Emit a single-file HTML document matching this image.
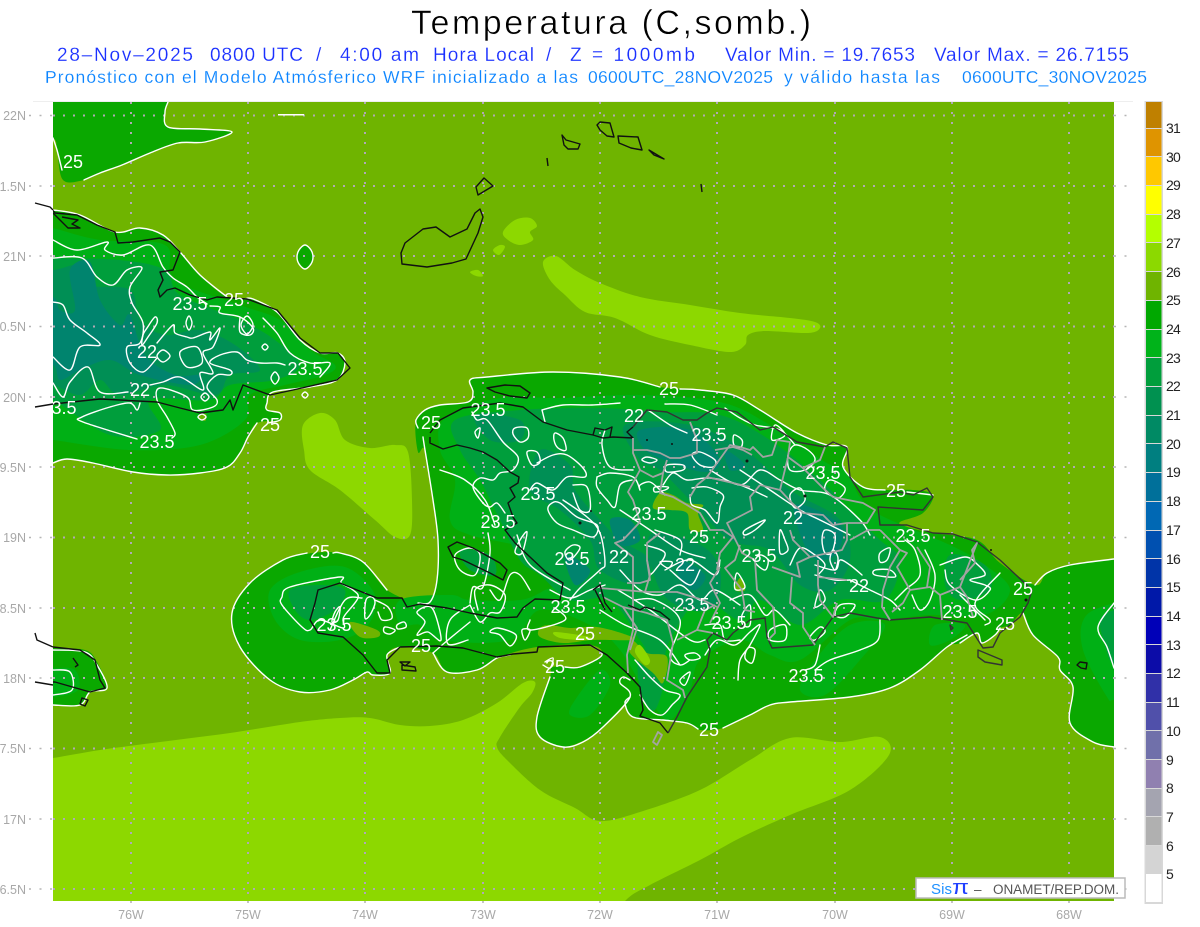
<!DOCTYPE html>
<html><head><meta charset="utf-8"><title>Temperatura</title>
<style>
html,body{margin:0;padding:0;background:#fff}
svg{display:block;font-family:"Liberation Sans",sans-serif}
.w{fill:none;stroke:#fff;stroke-width:1.4;stroke-linejoin:round;stroke-linecap:round}
.k{fill:none;stroke:#111;stroke-width:1.4;stroke-linejoin:round}
.g{fill:none;stroke:#a3a3a3;stroke-width:1.8;stroke-linejoin:round}
.l{fill:#fff;font-size:18px;text-anchor:middle}
.ax{fill:#a8a8a8;font-size:12.5px}
.cb{fill:#222;font-size:14px;letter-spacing:-.8px}
.t{stroke:#fff;stroke-width:.5}
.t2{stroke:#fff;stroke-width:.15}
</style></head><body>
<svg width="1200" height="927" viewBox="0 0 1200 927" xmlns="http://www.w3.org/2000/svg">
<rect width="1200" height="927" fill="#fff"/>
<text x="411" y="34" font-size="34" textLength="400" lengthAdjust="spacing" fill="#000" class="t">Temperatura (C,somb.)</text>
<g fill="#1a30ff" font-size="19" class="t2">
<text x="57" y="61" textLength="136" lengthAdjust="spacing">28–Nov–2025</text>
<text x="210" y="61" textLength="93" lengthAdjust="spacing">0800 UTC</text>
<text x="316" y="61">/</text>
<text x="340" y="61" textLength="79" lengthAdjust="spacing">4:00 am</text>
<text x="433" y="61" textLength="101" lengthAdjust="spacing">Hora Local</text>
<text x="546" y="61">/</text>
<text x="570" y="61" textLength="125" lengthAdjust="spacing">Z = 1000mb</text>
<text x="725" y="61" textLength="190" lengthAdjust="spacing">Valor Min. = 19.7653</text>
<text x="934" y="61" textLength="195" lengthAdjust="spacing">Valor Max. = 26.7155</text>
</g>
<g font-size="17.5" fill="#0a84ff" class="t2">
<text x="45" y="83" textLength="533" lengthAdjust="spacing">Pronóstico con el Modelo Atmósferico WRF inicializado a las</text>
<text x="588" y="83" textLength="185" lengthAdjust="spacing">0600UTC_28NOV2025</text>
<text x="784" y="83" textLength="156" lengthAdjust="spacing">y válido hasta las</text>
<text x="962" y="83" textLength="185" lengthAdjust="spacing">0600UTC_30NOV2025</text>
</g>

<clipPath id="m"><rect x="53" y="102" width="1061" height="799"/></clipPath>
<rect x="33" y="101" width="1100" height="1" fill="#eee"/>
<g clip-path="url(#m)">
<rect x="53" y="102" width="1061" height="799" fill="#6fb400"/>
<!-- light zones -->
<g fill="#8dd800" class="s">
<polygon points="543,262 556,256 575,270 600,283 640,297 690,305 740,313 790,318 815,322 820,328 808,333 765,331 748,335 745,345 730,352 690,345 650,335 615,318 585,312 565,295 550,280"/>
<polygon points="503,232 515,220 530,218 537,226 530,232 533,240 520,245 508,240"/>
<polygon points="493,250 500,245 505,247 499,255"/>
<polygon points="470,272 478,270 483,276 476,276"/>
<polygon points="303,425 320,413 335,420 345,440 370,448 395,445 408,452 412,500 410,535 395,537 375,520 340,490 310,470 304,450"/>
<polygon points="20,762 53,758 100,750 160,742 230,733 300,722 340,718 370,718 400,725 430,726 463,720 497,703 523,683 535,682 532,693 520,707 500,737 497,747 507,760 540,790 575,808 600,821 640,812 700,790 750,760 790,738 840,742 880,737 889,755 850,790 790,815 740,838 700,860 650,885 625,901 600,935 20,935"/>
</g>
<!-- 24-25 zones -->
<g fill="#0aa800" class="s">
<polygon points="25,80 170,80 168,102 165,112 168,127 200,129 232,132 205,142 178,143 150,153 122,165 100,173 84,180 63,180 57,150 53,138 25,125"/>
<polygon points="25,205 53,210 80,215 115,232 140,228 163,235 180,252 200,275 227,297 253,299 277,312 300,340 320,353 338,353 345,363 337,380 310,387 273,392 267,403 267,410 280,413 280,420 257,423 248,437 240,453 227,467 200,473 167,475 133,472 93,463 67,459 53,463 25,470"/>
<polygon points="25,645 53,648 85,650 97,662 107,688 90,692 80,705 53,705 25,705"/>
<polygon points="305,245 311,250 313,257 311,264 305,269 299,264 297,257 299,250"/>
<polygon points="470,380 487,377 553,372 620,377 660,387 700,390 733,395 760,410 797,433 827,445 847,447 843,467 863,487 887,490 913,490 933,495 923,513 900,522 907,527 933,533 977,540 1000,563 1035,585 1047,573 1070,565 1114,559 1145,555 1145,752 1114,747 1093,742 1070,723 1073,687 1060,670 1058,657 1033,635 1023,613 1010,625 1000,628 995,635 982,643 977,633 960,643 947,647 920,670 890,688 850,697 790,702 770,705 750,715 723,728 700,730 687,723 663,720 633,717 625,703 630,697 610,720 590,737 563,747 540,737 537,717 550,677 553,667 580,667 602,655 590,645 537,647 497,658 477,670 447,672 433,653 400,647 387,655 390,673 373,675 367,672 353,680 330,690 300,692 270,680 240,647 232,613 250,583 283,560 312,553 340,553 363,562 387,590 418,603 430,602 437,580 438,540 433,500 425,450 418,452 416,420 430,408 440,405 468,402 473,392"/>
</g>
<!-- 24 band -->
<g fill="#00b015" class="s">
<polygon points="25,222 53,228 100,240 165,245 175,280 240,305 280,320 310,350 335,365 325,375 285,385 250,395 245,420 200,445 130,450 53,440 25,438"/>
<polygon points="445,418 500,398 560,398 640,395 720,402 770,425 825,462 845,470 860,497 880,515 950,545 985,565 1010,590 985,615 930,615 880,620 850,620 800,660 770,655 740,640 700,660 690,690 670,720 650,700 620,650 590,625 540,610 510,640 440,640 420,625 400,625 400,600 450,595 470,600 520,600 545,590 560,580 530,550 470,535 450,520 455,480 440,450"/>
<polygon points="270,590 300,572 345,567 375,595 368,625 340,640 300,640 275,620"/>
<polygon points="1140,600 1114,603 1085,617 1083,650 1107,697 1114,700 1140,703"/>
<polygon points="850,625 885,625 860,660 825,695 800,690 815,660"/>
<polygon points="935,625 965,625 950,640 930,645"/>
<polygon points="575,700 600,670 610,685 590,715 570,715"/>
<polygon points="25,668 53,668 75,670 78,690 53,697 25,697"/>
</g>
<!-- 23 band -->
<g fill="#009e3c" class="s">
<polygon points="25,256 53,258 120,260 165,270 180,295 240,320 275,340 300,365 275,380 230,385 210,400 150,400 160,430 110,435 53,400 25,395"/>
<polygon points="455,420 520,410 600,408 660,412 720,415 770,440 820,480 850,510 880,540 900,560 885,600 840,600 800,625 760,600 740,620 700,600 670,640 660,670 640,640 610,600 570,600 540,575 520,560 500,520 480,480 460,450"/>
<polygon points="290,590 320,585 345,590 335,610 310,620 295,610"/>
<polygon points="950,555 985,565 990,590 960,600 945,585"/>
<polygon points="1140,608 1114,610 1100,620 1105,645 1114,665 1140,668"/>
<polygon points="640,650 665,665 655,710 640,690"/>
<polygon points="460,550 490,555 495,575 470,570"/>
</g>
<!-- 22 band -->
<g fill="#008f55" class="s">
<polygon points="25,268 53,270 80,265 90,285 130,290 140,320 165,335 200,330 235,345 260,370 230,375 215,395 165,385 120,395 100,380 80,395 53,385 25,382"/>
<polygon points="625,425 690,425 745,450 790,490 840,520 850,560 830,590 800,585 770,550 730,540 690,500 660,470 640,460"/>
<polygon points="540,450 570,465 575,490 600,520 620,540 650,560 640,585 600,570 590,540 560,510 530,490"/>
<polygon points="650,535 700,545 720,570 715,605 690,610 660,590"/>
<polygon points="475,415 520,420 520,440 490,440"/>
</g>
<!-- 21 band -->
<g fill="#00846e" class="s">
<polygon points="25,294 53,297 60,310 75,310 70,270 90,262 100,300 120,325 130,315 145,355 175,375 200,375 190,385 140,375 110,360 80,370 60,380 53,365 25,362"/>
<polygon points="640,430 690,430 720,460 705,472 670,462 645,450"/>
<polygon points="795,505 840,525 835,555 810,555"/>
<polygon points="610,520 630,520 640,540 620,545"/>
<polygon points="680,560 705,575 695,590 680,580"/>
<polygon points="565,555 590,570 575,585"/>
<polygon points="725,450 745,465 730,470"/>
</g>
<!-- olive patches -->
<g fill="#6fb400" class="s">
<polygon points="660,493 673,495 687,503 703,505 698,513 703,530 690,530 687,513 670,510 653,508"/>
<polygon points="540,628 550,625 570,628 597,627 627,635 632,640 593,640 563,643 540,637"/>
<polygon points="632,640 647,653 667,657 663,683 653,673 630,653"/>
<polygon points="350,622 377,630 378,637 360,637"/>
<polygon points="198,416 206,414 205,421"/>
<polygon points="735,590 740,578 745,590"/>
</g>
<g fill="#8dd800" class="s"><polygon points="555,632 590,637 585,640 560,638"/><polygon points="640,645 650,660 645,665 635,652"/></g>
<!-- grid -->
<g stroke="#b0a9b4" stroke-width="2" stroke-dasharray="2 8" fill="none">
<path d="M131 102V901M248 102V901M365 102V901M483 102V901M600 102V901M717 102V901M835 102V901M952 102V901M1069 102V901"/>
<path d="M53 115.5H1114M53 186H1114M53 256H1114M53 326.5H1114M53 397H1114M53 467H1114M53 537.5H1114M53 608H1114M53 678H1114M53 748.5H1114M53 819H1114M53 889H1114"/>
</g>
<!-- 25 contours -->
<rect x="278" y="114" width="26" height="1.5" fill="#fff"/>
<g class="w s" stroke-width="1.5">
<polyline points="53,138 57,150 62,170"/>
<polyline points="84,180 100,173 122,165 150,153 178,143 205,142 232,132 200,129 168,127 165,112 168,102"/>
<polyline points="53,210 80,215 115,232 140,228 163,235 180,252 200,275 227,297"/>
<polyline points="245,299 253,299 277,312 300,340 320,353 338,353 345,363 337,380 310,387 273,392 267,403 267,410 280,413 280,420 268,423"/>
<polyline points="257,423 248,437 240,453 227,467 200,473 167,475 133,472 93,463 67,459 53,463"/>
<polygon points="305,245 311,250 313,257 311,264 305,269 299,264 297,257 299,250"/>
<polyline points="660,387 620,377 553,372 487,377 470,380 473,392 468,402 440,405 425,410 416,420 418,428"/>
<polyline points="680,389 700,390 733,395 760,410 797,433 827,445 847,447 843,467 863,487 885,490"/>
<polyline points="1035,585 1047,573 1070,565 1114,559"/>
<polyline points="907,492 933,495"/>
<polyline points="423,437 425,450 433,500 438,540 437,580 430,602 418,603"/>
<polyline points="333,553 340,553 363,562 387,590"/>
<polyline points="307,553 283,560 250,583 232,613 240,647 270,680 300,692 330,690 353,680 367,672 373,675 390,673 387,655 400,647"/>
<polyline points="433,653 447,672 477,670 497,658 510,655"/>
<polyline points="565,667 580,667 602,655 590,645"/>
<polyline points="550,677 537,717 540,737 563,747 583,742 603,727 630,697 620,683 623,677 630,680"/>
<polyline points="630,697 625,703 633,717 663,720 687,723 698,729"/>
<polyline points="723,728 750,715 770,705 790,702 850,697 890,688 920,670 947,647 967,635"/>
<polyline points="960,643 977,633 982,643 995,635 1000,628"/>
<polyline points="1023,613 1033,635 1058,657 1060,670 1073,687 1070,723 1093,742 1114,747"/>
<polyline points="545,662 553,658 550,668 543,665"/>
</g>
<!-- inner contours -->
<g class="w s">
<polyline points="53,240 77,250 107,242 105,250 123,255 150,245 163,267 173,278 187,287 197,297 207,304"/>
<polyline points="210,306 220,307 220,313 240,317 253,328 250,335 240,332 240,317"/>
<polyline points="263,318 277,333 290,353 310,363 330,363 320,377"/>
<polyline points="285,365 277,363 260,363 247,360 237,352 220,355 210,363 230,370 230,375 217,375 207,387 217,400 213,407 193,410 187,397 160,388 157,400 167,417 175,433 172,438"/>
<polyline points="137,439 83,422 82,417 110,407 130,403 137,410 140,403"/>
<polyline points="128,392 100,392 88,367 70,382 63,397 53,383"/>
<polyline points="53,258 82,258 97,277 113,285 127,270 142,268 130,287 132,303 143,323 140,343 127,347 130,363 143,372 157,358"/>
<polyline points="53,302 63,305 70,320 87,333 100,345 80,347 70,370 53,357"/>
<polygon points="147,328 155,317 157,323 148,337 142,345 143,335"/>
<polygon points="157,356 163,350 170,356 163,362"/>
<polygon points="180,352 197,347 202,363 187,367"/>
<polygon points="189,316 192,323 189,330 186,323"/>
<polygon points="247,316 253,325 247,334 241,325"/>
<polygon points="265,344 268,347 265,350 262,347"/>
<polygon points="275,372 279,378 275,384 271,378"/>
<polygon points="205,393 209,397 205,401 201,397"/>
<polygon points="198,417 202,414 206,417 202,420"/>
<polygon points="305,392 308,395 305,398 302,395"/>
<polyline points="157,343 173,325 175,333 187,337 193,338 210,332 210,340 220,328 213,347 203,353 213,373 200,373 203,390 180,377 163,382 150,385"/>
<!-- Jamaica -->
<polyline points="53,650 85,652 97,665 107,688 90,692 80,705 53,705"/>
<polyline points="53,670 70,672 72,690 53,695"/>
<!-- Tiburon loop -->
<polygon points="282,597 290,587 340,577 341,583 353,590 358,598 345,615 343,620 343,628 320,620 310,630 302,627 282,605"/>
<polyline points="330,630 345,600 362,598"/>
<polygon points="335,612 340,607 338,620 332,622"/>
<polygon points="366,600 372,597 375,603 370,615 365,618"/>
<polyline points="375,600 388,607 392,618 382,620 378,612"/>
<polygon points="397,625 404,622 406,627 398,629"/>
<polygon points="385,627 395,630 390,634 384,632"/>
<polygon points="417,612 432,608 441,640 428,632 417,635 425,622"/>
<polyline points="433,653 448,640 470,622"/>
<polyline points="468,640 448,644 450,620 470,605"/>
<polygon points="490,632 498,628 516,635 510,646 500,635"/>
<polygon points="522,630 530,630 525,640"/>
<polyline points="470,605 480,622 490,613 500,612 505,595 490,585 475,590 478,610"/>
<polyline points="530,620 530,630 565,620 555,608"/>
<!-- Haiti -->
<polyline points="542,410 563,405 592,405 620,403"/>
<polyline points="542,410 545,422"/>
<polyline points="472,412 477,420 487,420 503,442 518,457 513,470 500,473 493,480 480,478 473,487 483,503 490,507 497,503 505,513"/>
<polyline points="488,533 490,553 483,587 473,587 470,603"/>
<polygon points="515,428 527,428 528,438 520,442 513,434"/>
<polygon points="555,433 563,438 566,450 558,448 554,440"/>
<polygon points="527,452 537,452 540,462 532,465"/>
<polyline points="537,463 553,455 567,455 583,468 585,477 567,477 553,490 537,483 530,490"/>
<polygon points="552,503 560,503 577,517 597,525 593,537 573,530 557,523 548,510"/>
<polyline points="573,485 587,487 590,510 580,510 573,493"/>
<polyline points="563,500 587,517 600,533 605,563 600,570 580,588 570,600"/>
<polyline points="597,477 610,473 633,477 640,490"/>
<polyline points="597,477 597,487 607,500 615,507 620,485 632,480"/>
<polyline points="605,430 602,445 610,467 633,470"/>
<polygon points="475,432 480,428 478,438"/>
<polygon points="520,540 527,532 522,553 515,552"/>
<polyline points="517,535 530,565 570,590"/>
<polygon points="565,552 573,545 580,548 570,560"/>
<polyline points="440,470 465,480 485,500 495,525"/>
<polygon points="455,555 470,548 480,555 475,575 460,570"/>
<polyline points="490,590 500,600 510,575 520,575 530,590"/>
<polyline points="550,590 570,598 590,590 605,585"/>
<!-- DR -->
<polyline points="648,410 670,425 687,433"/>
<polyline points="665,404 690,405 717,415"/>
<polyline points="725,408 740,418 755,425 780,430 795,445"/>
<polygon points="642,460 647,457 657,460 650,463"/>
<polygon points="667,465 683,465 683,470 667,472"/>
<polygon points="692,455 700,452 715,460 713,467 700,465"/>
<polyline points="740,470 770,490 800,510 820,520 850,535"/>
<polyline points="620,510 650,530 680,550 705,558"/>
<polyline points="663,485 673,473 687,480 710,478 740,485 767,497"/>
<polyline points="640,490 640,485 650,482 660,490 665,495"/>
<polyline points="692,488 707,487 723,495 720,507 717,523 705,510 692,505 690,495"/>
<polygon points="655,487 668,487 665,490 655,492"/>
<polyline points="710,470 740,485 760,470 780,480 800,490 830,495 860,520 870,535"/>
<polygon points="734,435 742,440 741,447 734,445"/>
<polygon points="775,425 785,435 772,440"/>
<polygon points="795,445 808,450 815,460 805,470 790,470 788,455"/>
<polygon points="830,480 845,488 838,498 825,490"/>
<polygon points="825,530 835,535 832,552 825,553 822,540"/>
<polygon points="745,530 765,520 755,530 745,535"/>
<polygon points="780,530 785,540 788,550 780,553"/>
<polygon points="790,495 800,488 805,500 795,508"/>
<polyline points="790,565 800,548 815,555 825,565 818,575"/>
<polyline points="815,575 835,580 850,580"/>
<polyline points="815,565 835,570 840,560 850,565 862,575"/>
<polygon points="833,550 838,558 835,570 830,560"/>
<polygon points="880,553 890,548 887,560 880,562"/>
<polygon points="875,570 890,570 895,577 875,575"/>
<polygon points="760,555 768,560 765,570 755,562"/>
<polygon points="820,590 825,600 815,607"/>
<polygon points="840,605 855,605 845,617 835,615"/>
<polygon points="820,627 825,632 815,640 810,637"/>
<polyline points="905,540 915,550 920,575 905,590 895,600"/>
<polyline points="925,550 935,575 930,600 920,610 912,595"/>
<polyline points="940,565 965,557 978,565 985,575 970,580 985,585 990,590 975,600 950,585 945,570"/>
<polyline points="1000,573 975,603 990,620 985,625"/>
<polyline points="960,595 975,610 985,620"/>
<polyline points="850,580 870,590 890,600 900,610"/>
<polyline points="820,645 815,665 805,670"/>
<polyline points="880,620 878,640 860,650 830,660 815,670"/>
<polygon points="742,615 750,605 750,625 743,625"/>
<polygon points="770,630 785,625 785,640 770,640"/>
<polyline points="730,600 750,595 765,615 775,610 790,625"/>
<polygon points="737,573 745,587 735,589"/>
<!-- SW peninsula -->
<polyline points="635,660 650,677 665,690 680,695 672,705 662,715 650,710 640,695"/>
<polyline points="635,600 655,600 680,620 670,655 680,665 690,660"/>
<polyline points="600,610 625,625 660,640 680,665"/>
<polyline points="618,590 650,610 690,640 705,640"/>
<polyline points="620,570 640,590 660,595 680,585 700,600 715,590 740,605"/>
<polyline points="700,570 690,585 670,570"/>
<polyline points="665,570 690,560 715,575 720,560"/>
<polygon points="660,562 672,562 668,568"/>
<polyline points="655,530 680,540 680,555"/>
<polyline points="645,545 665,553 655,570 650,575"/>
<polyline points="705,655 717,640 735,645 750,632 760,625 750,645 740,660 738,680"/>
<polyline points="705,625 720,625 725,640 740,640"/>
<polygon points="685,655 695,653 700,658 690,660"/>
<polygon points="680,680 690,672 685,685"/>
<polygon points="748,648 755,650 752,663 745,658"/>
<polyline points="1114,603 1098,627 1107,647 1114,668"/>
</g>
<!-- coast -->
<g class="k">
<polyline points="35,203 50,207 55,213 77,215 97,225 115,232 118,243 133,242 160,238 170,242 180,252 173,270 160,272 163,280 158,290 160,297 167,290 175,288 190,295 207,300 217,297 247,299 277,310 300,338 320,353 338,353 350,368 337,380 293,390 270,395 243,385 233,410 230,400 223,410 200,413 180,408 157,402 100,399 53,404 35,407"/>
<polyline points="53,213 60,220 68,228 80,228 72,224 78,220 62,217"/>
<polyline points="35,633 37,640 53,647 80,650 95,660 100,680 105,688 90,692 55,682 35,682"/>
<polyline points="73,658 78,665 75,667"/>
<polygon points="82,698 88,700 85,706 80,704"/>
<polygon points="562,135 566,140 580,144 578,149 568,149 564,145"/>
<polyline points="547,158 548,166"/>
<polygon points="476,187 484,178 493,186 478,195"/>
<polygon points="480,209 483,217 478,233 466,259 452,263 427,267 402,264 401,253 405,243 423,229 436,227 450,237 467,229 475,213"/>
<polygon points="600,122 610,123 612,130 614,137 607,136 600,130 597,125"/>
<polygon points="618,136 638,137 642,150 631,148 619,143"/>
<polygon points="649,150 664,159 654,155"/>
<polyline points="701,184 702,192"/>
<polygon points="1077,665 1080,662 1087,663 1086,669 1081,668"/>
<polygon points="487,388 505,385 520,386 530,393 527,398 510,396 495,392"/>
<polygon points="448,547 457,542 473,548 500,563 507,570 503,580 490,573 463,560 453,557"/>
<polyline points="430,437 430,443 443,449 457,445 470,448 483,452 497,460 510,472 519,477 518,483 510,488 515,497 508,503 513,517 517,523 505,530 515,543 530,557 547,573 563,583 560,600 535,599 523,608 517,617 497,618 470,613 447,608 420,604 407,607 402,598 377,598 357,590 340,583 318,590 315,603 310,620 318,633 343,637 363,655 377,673 390,673 387,660 400,647 437,646 463,648 497,657 513,654 537,652 538,647 590,645 607,655 627,673 640,687 643,710 640,716 660,723 668,733"/>
<polyline points="430,433 440,420 463,408 500,403 523,407 543,422 567,430 593,435 603,438 613,437 633,438 627,432 633,427"/>
<polyline points="593,435 595,428 605,430 612,427 610,437"/>
<polygon points="402,665 415,667 416,671 402,670"/>
<polygon points="400,662 410,662 405,666"/>
</g>
<g fill="none" stroke="#333" stroke-width="1.4" stroke-linejoin="round">
<polyline points="668,733 677,717 687,697 707,667 710,650 707,640 713,633 727,640 733,633 750,620 765,618 767,637 772,648 813,645 833,617 850,613 877,618 890,620 930,617 967,623 983,648 993,647 1000,633 1020,617 1028,603 1032,590 1000,560 977,542 953,534 933,533 907,525 880,525 878,507 923,510 933,497 927,488 913,495 900,492 863,497 850,477 847,448 833,442 825,447 797,442 773,427 760,430 737,412 717,408 707,413 697,420 683,420 667,412 647,410 633,427"/>
<polygon points="978,650 990,655 1002,660 1002,665 985,662 978,657"/>
<polygon points="950,625 953,628 951,630"/>
</g>
<!-- borders -->
<g class="g">
<polyline points="633,438 633,453 640,470 633,483 628,492 633,500 640,522 623,540 615,543 633,557 633,580 633,630 627,655 628,673"/>
<polyline points="633,450 647,450 660,453 670,458 680,458 697,453 697,440 690,422"/>
<polyline points="640,470 653,477 663,473 667,460"/>
<polyline points="663,473 660,493 673,497 687,505 700,513 710,530 723,530 733,537 720,553 717,570"/>
<polyline points="697,485 707,477 750,487"/>
<polyline points="690,497 697,485"/>
<polyline points="707,477 730,445 740,447 750,450 753,447 763,457 772,455 777,440 790,442 788,457 803,468 820,460 825,447"/>
<polyline points="788,457 780,490 792,503 803,513 823,515 833,525 847,523 867,523 875,510 863,503 833,497 823,488 803,468"/>
<polyline points="760,485 780,490"/>
<polyline points="760,485 750,497 752,510 727,523 733,535 742,553 755,560 757,590 773,607 775,633 768,640"/>
<polyline points="772,567 800,577 797,563 810,557 793,540 790,530"/>
<polyline points="792,577 790,603 803,613 803,627 815,645"/>
<polyline points="818,560 818,585 820,600 833,617 837,603"/>
<polyline points="818,577 847,580"/>
<polyline points="847,523 847,540 842,550 810,557"/>
<polyline points="880,530 900,550 890,567 883,590 882,607 890,620"/>
<polyline points="900,550 907,553 897,567 910,590 903,603 892,612"/>
<polyline points="910,590 930,587 940,595 960,587 977,543 972,550 975,563 960,580"/>
<polyline points="960,587 967,597 973,617"/>
<polyline points="940,595 942,620"/>
<polyline points="917,547 930,567 927,587"/>
<polyline points="660,533 647,543 647,560 650,580 640,583 627,583"/>
<polyline points="600,588 623,590 647,592 677,592 703,600 717,607"/>
<polyline points="603,597 623,607 637,628 630,650"/>
<polyline points="623,607 647,613 667,620 673,643 667,680 683,690 685,698"/>
<polyline points="697,630 677,640"/>
<polyline points="710,623 720,603 710,583 720,567"/>
<polyline points="715,605 705,610 697,630 713,633"/>
<polyline points="645,592 650,575 647,560"/>
<polygon points="653,742 658,732 662,735 657,745"/>
<polyline points="740,545 735,560 725,568 742,590 745,610 755,612"/>
<polyline points="850,540 868,530 880,530"/>
<polyline points="715,450 733,447 743,450 752,455"/>
</g>
<g class="k">
<polyline points="628,605 640,610 645,607 660,612 670,620"/>
<polyline points="595,590 600,600 605,610"/>
<polyline points="593,590 600,585 605,603 612,612"/>
</g>
<g fill="#111"><circle cx="647" cy="440" r="1"/><circle cx="672" cy="444" r="1"/><circle cx="747" cy="461" r="1.5"/><circle cx="805" cy="496" r="1.5"/><circle cx="591" cy="511" r="1"/><circle cx="580" cy="523" r="1.5"/><circle cx="991" cy="550" r="1"/><circle cx="1026" cy="600" r="1.5"/></g>
<!-- labels -->
<g class="l">
<text x="73" y="168">25</text><text x="190" y="310">23.5</text><text x="234" y="306">25</text><text x="147" y="358">22</text><text x="305" y="375">23.5</text><text x="140" y="396">22</text><text x="64" y="414">3.5</text><text x="157" y="448">23.5</text><text x="270" y="431">25</text><text x="669" y="395">25</text><text x="488" y="416">23.5</text><text x="431" y="429">25</text><text x="634" y="422">22</text><text x="709" y="441">23.5</text><text x="823" y="479">23.5</text><text x="896" y="497">25</text><text x="538" y="500">23.5</text><text x="649" y="520">23.5</text><text x="498" y="528">23.5</text><text x="793" y="524">22</text><text x="699" y="543">25</text><text x="913" y="542">23.5</text><text x="320" y="558">25</text><text x="619" y="563">22</text><text x="572" y="565">23.5</text><text x="759" y="562">23.5</text><text x="685" y="571">22</text><text x="1023" y="595">25</text><text x="859" y="592">22</text><text x="568" y="613">23.5</text><text x="692" y="611">23.5</text><text x="960" y="618">23.5</text><text x="1005" y="630">25</text><text x="334" y="631">23.5</text><text x="729" y="629">23.5</text><text x="585" y="640">25</text><text x="421" y="652">25</text><text x="555" y="673">25</text><text x="806" y="682">23.5</text><text x="709" y="736">25</text>
</g>
</g>
<!-- coast outside the plot -->
<g class="k"><polyline points="35,203 50,207 53,210"/><polyline points="35,407 53,404"/><polyline points="35,633 37,640 53,647"/><polyline points="35,682 53,685"/></g>
<!-- outside ticks -->
<g stroke="#b5b5b5" stroke-width="1.6" stroke-dasharray="2 8.5" fill="none">
<path d="M29 115.5H53M29 186H53M29 256H53M29 326.5H53M29 397H53M29 467H53M29 537.5H53M29 608H53M29 678H53M29 748.5H53M29 819H53M29 889H53"/>
<path d="M1114 115.5H1134M1114 186H1134M1114 256H1134M1114 326.5H1134M1114 397H1134M1114 467H1134M1114 537.5H1134M1114 608H1134M1114 678H1134M1114 748.5H1134M1114 819H1134M1114 889H1134"/>
<path d="M131 901V908M248 901V908M365 901V908M483 901V908M600 901V908M717 901V908M835 901V908M952 901V908M1069 901V908"/>
</g>
<g class="ax" text-anchor="end">
<text x="26" y="120">22N</text><text x="26" y="191">1.5N</text><text x="26" y="261">21N</text><text x="26" y="331">0.5N</text><text x="26" y="402">20N</text><text x="26" y="472">9.5N</text><text x="26" y="542">19N</text><text x="26" y="613">8.5N</text><text x="26" y="683">18N</text><text x="26" y="753">7.5N</text><text x="26" y="824">17N</text><text x="26" y="894">6.5N</text>
</g>
<g class="ax" text-anchor="middle">
<text x="131" y="919">76W</text><text x="248" y="919">75W</text><text x="365" y="919">74W</text><text x="483" y="919">73W</text><text x="600" y="919">72W</text><text x="717" y="919">71W</text><text x="835" y="919">70W</text><text x="952" y="919">69W</text><text x="1069" y="919">68W</text>
</g>
<!-- colorbar -->
<rect x="1144.5" y="101" width="18.5" height="803" fill="#d8d8d8"/>
<g>
<rect x="1146" y="102" width="15.5" height="26" fill="#bf8000"/>
<rect x="1146" y="129" width="15.5" height="27" fill="#df9400"/>
<rect x="1146" y="157" width="15.5" height="28" fill="#ffc800"/>
<rect x="1146" y="186" width="15.5" height="28" fill="#ffff00"/>
<rect x="1146" y="215" width="15.5" height="27" fill="#b4ff00"/>
<rect x="1146" y="243" width="15.5" height="28" fill="#8cd900"/>
<rect x="1146" y="272" width="15.5" height="28" fill="#6fb400"/>
<rect x="1146" y="301" width="15.5" height="28" fill="#00a800"/>
<rect x="1146" y="330" width="15.5" height="27" fill="#00b31a"/>
<rect x="1146" y="358" width="15.5" height="28" fill="#009e3c"/>
<rect x="1146" y="387" width="15.5" height="28" fill="#009150"/>
<rect x="1146" y="416" width="15.5" height="27" fill="#008a64"/>
<rect x="1146" y="444" width="15.5" height="28" fill="#007f80"/>
<rect x="1146" y="473" width="15.5" height="28" fill="#00709a"/>
<rect x="1146" y="502" width="15.5" height="28" fill="#0068b4"/>
<rect x="1146" y="531" width="15.5" height="27" fill="#0050b0"/>
<rect x="1146" y="559" width="15.5" height="28" fill="#0034a8"/>
<rect x="1146" y="588" width="15.5" height="28" fill="#0018a8"/>
<rect x="1146" y="617" width="15.5" height="27" fill="#0000b8"/>
<rect x="1146" y="645" width="15.5" height="28" fill="#0c0ca8"/>
<rect x="1146" y="674" width="15.5" height="28" fill="#3030a8"/>
<rect x="1146" y="703" width="15.5" height="27" fill="#5050aa"/>
<rect x="1146" y="731" width="15.5" height="28" fill="#7070aa"/>
<rect x="1146" y="760" width="15.5" height="28" fill="#9080b0"/>
<rect x="1146" y="789" width="15.5" height="27" fill="#a4a4b0"/>
<rect x="1146" y="817" width="15.5" height="28" fill="#b0b0b0"/>
<rect x="1146" y="846" width="15.5" height="28" fill="#d4d4d4"/>
<rect x="1146" y="874" width="15.5" height="28" fill="#ffffff"/>
</g>
<g class="cb">
<text x="1166" y="133">31</text><text x="1166" y="162">30</text><text x="1166" y="190">29</text><text x="1166" y="219">28</text><text x="1166" y="248">27</text><text x="1166" y="277">26</text><text x="1166" y="305">25</text><text x="1166" y="334">24</text><text x="1166" y="363">23</text><text x="1166" y="391">22</text><text x="1166" y="420">21</text><text x="1166" y="449">20</text><text x="1166" y="477">19</text><text x="1166" y="506">18</text><text x="1166" y="535">17</text><text x="1166" y="564">16</text><text x="1166" y="592">15</text><text x="1166" y="621">14</text><text x="1166" y="650">13</text><text x="1166" y="678">12</text><text x="1166" y="707">11</text><text x="1166" y="736">10</text><text x="1166" y="765">9</text><text x="1166" y="793">8</text><text x="1166" y="822">7</text><text x="1166" y="851">6</text><text x="1166" y="879">5</text>
</g>
<!-- logo box -->
<rect x="916" y="878" width="209" height="20" fill="#fff" stroke="#bbb" stroke-width="1.5"/>
<text x="931" y="894" font-size="15" fill="#1e90ff" textLength="21" lengthAdjust="spacing">Sis</text>
<text x="952" y="894" font-size="20" fill="#2040ff" textLength="17" lengthAdjust="spacingAndGlyphs">π</text>
<text x="974" y="894" font-size="13.5" fill="#555">–</text>
<text x="993" y="894" font-size="13.5" fill="#555" textLength="126" lengthAdjust="spacing">ONAMET/REP.DOM.</text>
</svg>
<script>
document.querySelectorAll('g.s polygon,g.s polyline').forEach(function(e){
var p=e.getAttribute('points').trim().split(/\s+/).map(function(s){return s.split(',').map(Number)}),c=e.tagName.toLowerCase()=='polygon',n=p.length;
if(n<3)return;
function a(i){return c?p[(i+n)%n]:p[Math.max(0,Math.min(n-1,i))]}
var d='M'+p[0][0]+' '+p[0][1],m=c?n:n-1;
for(var i=0;i<m;i++){var q=a(i-1),r=a(i),s=a(i+1),t=a(i+2);
d+='C'+(r[0]+(s[0]-q[0])/6).toFixed(1)+' '+(r[1]+(s[1]-q[1])/6).toFixed(1)+' '+(s[0]-(t[0]-r[0])/6).toFixed(1)+' '+(s[1]-(t[1]-r[1])/6).toFixed(1)+' '+s[0]+' '+s[1]}
if(c)d+='Z';
var o=document.createElementNS('http://www.w3.org/2000/svg','path');o.setAttribute('d',d);e.parentNode.replaceChild(o,e)});
</script>
</body></html>
